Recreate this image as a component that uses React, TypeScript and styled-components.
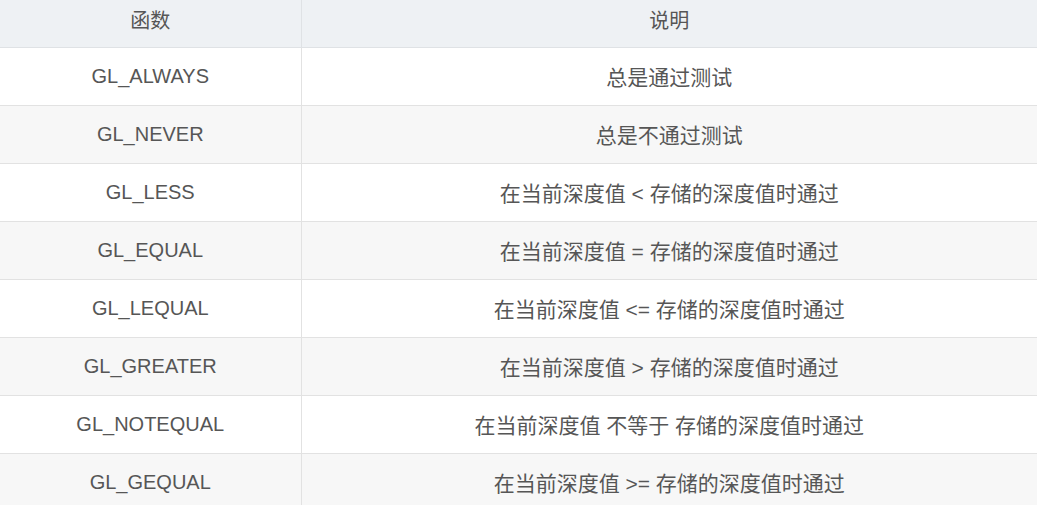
import styled, { createGlobalStyle } from 'styled-components';

const rows: [string, string][] = [
  ['GL_ALWAYS', '总是通过测试'],
  ['GL_NEVER', '总是不通过测试'],
  ['GL_LESS', '在当前深度值 < 存储的深度值时通过'],
  ['GL_EQUAL', '在当前深度值 = 存储的深度值时通过'],
  ['GL_LEQUAL', '在当前深度值 <= 存储的深度值时通过'],
  ['GL_GREATER', '在当前深度值 > 存储的深度值时通过'],
  ['GL_NOTEQUAL', '在当前深度值 不等于 存储的深度值时通过'],
  ['GL_GEQUAL', '在当前深度值 >= 存储的深度值时通过'],
];

export default function App() {
  return (
    <>
      <GlobalStyle />
      <Table>
        <colgroup>
          <col style={{ width: 301 }} />
          <col />
        </colgroup>
        <thead>
          <tr>
            <HeadCell>函数</HeadCell>
            <HeadCell>说明</HeadCell>
          </tr>
        </thead>
        <tbody>
          {rows.map(([name, desc], i) => (
            <Row key={name} $striped={i % 2 === 1}>
              <Cell $size={20}>{name}</Cell>
              <Cell $size={21}>{desc}</Cell>
            </Row>
          ))}
        </tbody>
      </Table>
    </>
  );
}

const GlobalStyle = createGlobalStyle`
  html, body {
    margin: 0;
    padding: 0;
    background: #ffffff;
    height: 505px;
    overflow: hidden;
  }
  body {
    font-family: "Liberation Sans", "Noto Sans CJK SC", sans-serif;
  }
`;
const Table = styled.table`
  width: 1037px;
  border-collapse: collapse;
  table-layout: fixed;
  color: #565656;
`;
const HeadCell = styled.th`
  height: 47px;
  padding: 0 0 7px;
  box-sizing: border-box;
  background: #eef1f4;
  font-size: 20px;
  font-weight: 400;
  text-align: center;
  border-bottom: 1px solid #dfe2e5;
  & + & {
    border-left: 1px solid #dfe2e5;
  }
`;
const Row = styled.tr<{ $striped: boolean }>`
  background: ${(p) => (p.$striped ? '#f7f7f7' : '#ffffff')};
`;
const Cell = styled.td<{ $size: number }>`
  height: 57px;
  padding: 0;
  font-size: ${(p) => p.$size}px;
  text-align: center;
  border-bottom: 1px solid #e2e2e2;
  & + & {
    border-left: 1px solid #e2e2e2;
  }
`;
